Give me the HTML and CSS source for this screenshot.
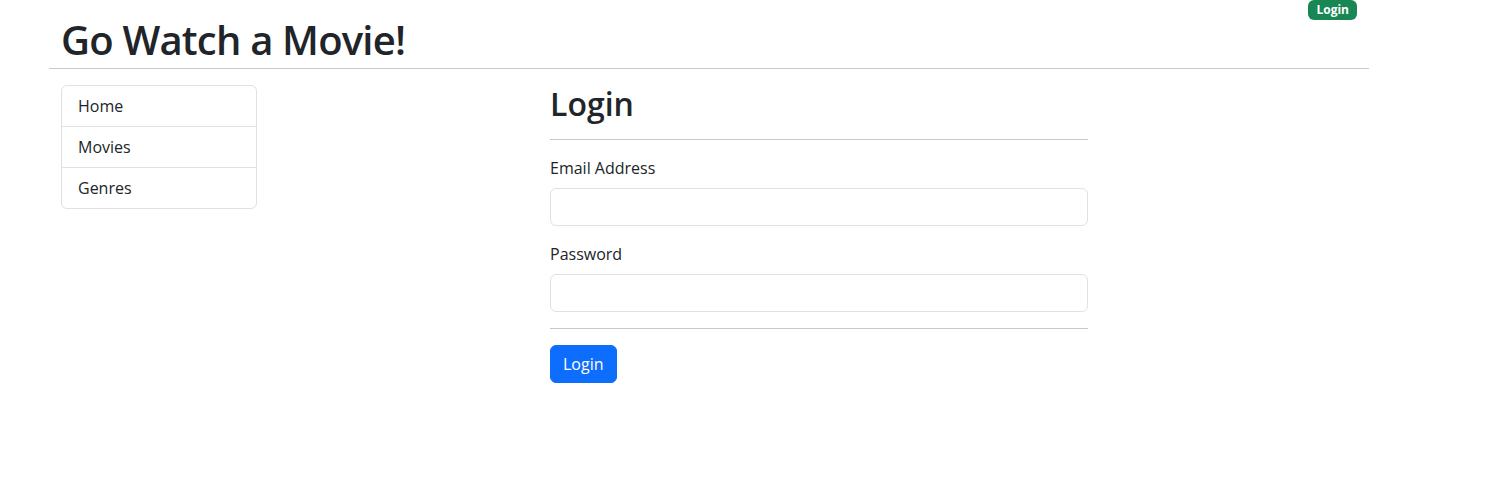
FILE: index.html
```html
<!DOCTYPE html>
<html lang="en">
<head>
<meta charset="utf-8">
<title>Go Watch a Movie!</title>
<link rel="stylesheet" href="styles.css">
</head>
<body>
<div class="container">
  <header class="header">
    <h1 class="title">Go Watch a Movie!</h1>
    <a href="#" class="badge">Login</a>
  </header>
  <hr class="rule-top">
  <div class="main">
    <nav class="sidebar">
      <a href="#" class="list-item">Home</a>
      <a href="#" class="list-item">Movies</a>
      <a href="#" class="list-item">Genres</a>
    </nav>
    <section class="content">
      <h2 class="page-title">Login</h2>
      <hr class="rule">
      <form class="login-form">
        <div class="field">
          <label class="form-label" for="email">Email Address</label>
          <input class="form-control" type="email" id="email">
        </div>
        <div class="field">
          <label class="form-label" for="password">Password</label>
          <input class="form-control" type="password" id="password">
        </div>
        <hr class="rule">
        <button type="button" class="btn">Login</button>
      </form>
    </section>
  </div>
</div>
</body>
</html>
```

FILE: styles.css
```css
* { box-sizing: border-box; }
body {
  margin: 0;
  font-family: "Open Sans", "Noto Sans", sans-serif;
  font-size: 16px;
  line-height: 1.5;
  color: #212529;
  background: #fff;
}
.container {
  width: 1320px;
  margin-left: 49px;
}
.header {
  display: flex;
  justify-content: space-between;
  align-items: flex-start;
  padding: 0 12px;
}
.title {
  margin: 16px 0 0;
  font-size: 40px;
  font-weight: 600;
  line-height: 1.2;
  letter-spacing: -0.8px;
}
.badge {
  display: inline-block;
  background: #198754;
  color: #fff;
  font-size: 12px;
  font-weight: 700;
  line-height: 1;
  padding: 4px 8px;
  border-radius: 6px;
  text-decoration: none;
}
hr {
  border: 0;
  border-top: 1px solid #212529;
  opacity: 0.25;
}
.rule-top {
  margin: 4px 0 16px;
}
.main {
  display: flex;
  padding: 0 12px;
}
.sidebar {
  width: 196px;
  flex: none;
  display: flex;
  flex-direction: column;
  border: 1px solid #dee2e6;
  border-radius: 6px;
  align-self: flex-start;
}
.list-item {
  display: block;
  padding: 8px 16px;
  color: #212529;
  text-decoration: none;
  border-top: 1px solid #dee2e6;
}
.list-item:first-child { border-top: 0; }
.content {
  width: 538px;
  margin-left: 293px;
}
.page-title {
  margin: 0 0 8px;
  font-size: 32px;
  font-weight: 600;
  line-height: 1.2;
}
.rule { margin: 16px 0; }
.login-form { margin: 0; }
.field { margin-bottom: 16px; }
.form-label {
  display: inline-block;
  margin-bottom: 8px;
}
.form-control {
  display: block;
  width: 100%;
  height: 38px;
  padding: 6px 12px;
  font: inherit;
  border: 1px solid #dee2e6;
  border-radius: 6px;
  background: #fff;
}
.field + .rule { margin-top: 0; }
.btn {
  font: inherit;
  color: #fff;
  background: #0d6efd;
  border: 1px solid #0d6efd;
  border-radius: 6px;
  padding: 6px 12px;
  line-height: 1.5;
}
```
